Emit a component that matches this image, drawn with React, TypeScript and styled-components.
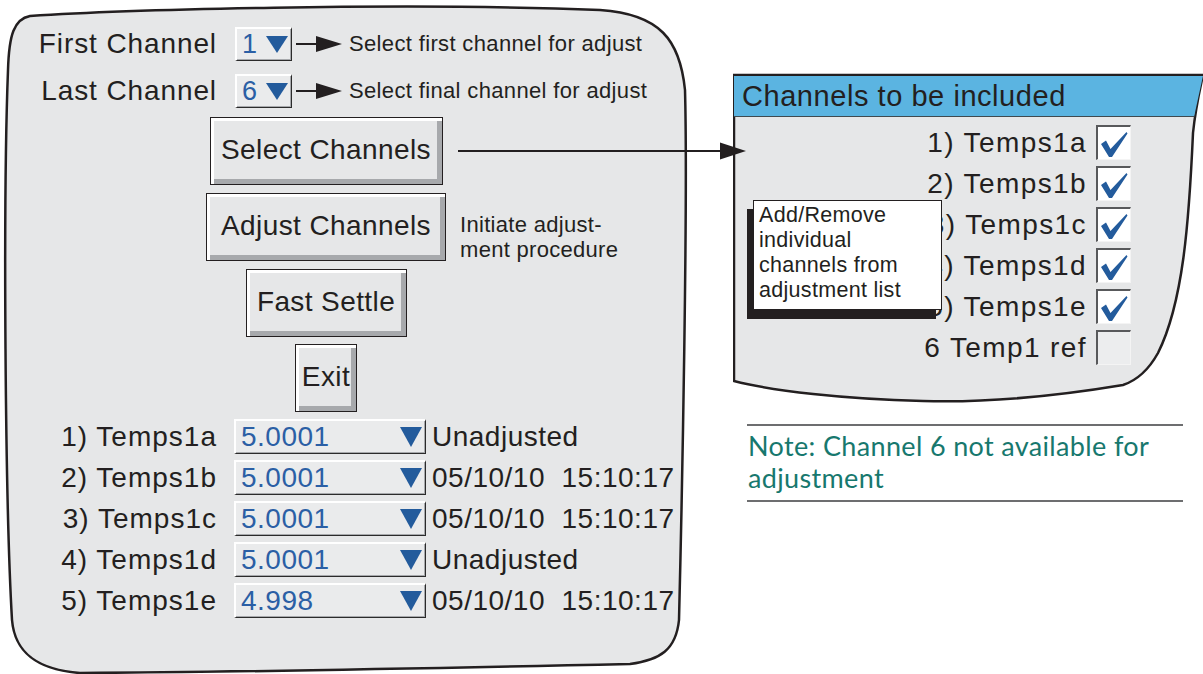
import styled, { createGlobalStyle } from "styled-components";

const GlobalStyle = createGlobalStyle`
  html, body {
    margin: 0;
    padding: 0;
    background: #fff;
  }
  body {
    font-family: "Liberation Sans", Arial, sans-serif;
    color: #231f20;
  }
  * {
    box-sizing: border-box;
  }
`;

const Page = styled.div`
  display: flex;
  width: 1203px;
  height: 674px;
  overflow: hidden;
`;

const LeftPanel = styled.div`
  position: relative;
  flex-shrink: 0;
  width: 690px;
  height: 674px;
  padding-top: 27px;
`;

const Outline = styled.svg`
  position: absolute;
  inset: 0;
  z-index: 0;
`;

const Content = styled.div`
  position: relative;
  z-index: 1;
`;

const PickerRow = styled.div`
  display: flex;
  align-items: center;
  height: 34px;

  & + & {
    margin-top: 13px;
  }
`;

const PickerLabel = styled.span`
  width: 217px;
  margin-right: 18px;
  text-align: right;
  font-size: 28px;
  letter-spacing: 0.9px;
`;

const Dropdown = styled.div<{ $width: number; $height: number; $size: number }>`
  display: flex;
  align-items: center;
  justify-content: space-between;
  flex-shrink: 0;
  width: ${(p) => p.$width}px;
  height: ${(p) => p.$height}px;
  padding: 0 3px 0 5px;
  background: #eaebec;
  border-top: 2px solid #fff;
  border-left: 2px solid #fff;
  border-right: 1px solid #2b2b2b;
  border-bottom: 1px solid #2b2b2b;
  box-shadow: inset -1px -1px 0 #a7a9ac;
  color: #2b5fa5;
  font-size: ${(p) => p.$size}px;
  letter-spacing: 0.5px;
`;

const Triangle = styled.span<{ $w: number; $h: number }>`
  width: 0;
  height: 0;
  border-left: ${(p) => p.$w / 2}px solid transparent;
  border-right: ${(p) => p.$w / 2}px solid transparent;
  border-top: ${(p) => p.$h}px solid #235b9c;
`;

const SmallArrow = styled.svg`
  margin-left: 4px;
  flex-shrink: 0;
`;

const Hint = styled.span`
  margin-left: 7px;
  font-size: 22px;
  letter-spacing: 0.35px;
`;

const ButtonGrid = styled.div`
  display: grid;
  grid-template-columns: minmax(0, 1fr) auto minmax(0, 1fr);
  row-gap: 7px;
  width: 652px;
  margin-top: 9px;
  align-items: center;
`;

const Button = styled.button<{ $width: number }>`
  grid-column: 2;
  justify-self: center;
  width: ${(p) => p.$width}px;
  height: 68px;
  padding: 0 0 2px;
  background: #e6e7e8;
  border: 1px solid #231f20;
  box-shadow: inset 3px 3px 0 #fff, inset -5px -5px 0 #a7a9ac;
  font-family: "Liberation Sans", Arial, sans-serif;
  font-size: 28px;
  letter-spacing: 0.4px;
  color: #231f20;
`;

const LongArrow = styled.svg`
  grid-column: 3;
  position: relative;
  z-index: 2;
  margin-left: 12px;
  overflow: visible;
`;

const SideNote = styled.div`
  grid-column: 3;
  align-self: start;
  margin: 20px 0 0 14px;
  font-size: 22px;
  line-height: 25px;
  letter-spacing: 0.3px;
  white-space: nowrap;
`;

const ValueList = styled.div`
  display: flex;
  flex-direction: column;
  gap: 6px;
  margin-top: 7px;
`;

const ValueRow = styled.div`
  display: flex;
  align-items: center;
  height: 35px;
`;

const RowLabel = styled.span`
  width: 217px;
  margin-right: 17px;
  text-align: right;
  font-size: 28px;
  letter-spacing: 1px;
`;

const Status = styled.span`
  margin-left: 6px;
  font-size: 28px;
  letter-spacing: 0.5px;
  white-space: pre;
`;

const RightColumn = styled.div`
  display: flex;
  flex-direction: column;
  width: 470px;
  margin-left: 43px;
  padding-top: 73px;
`;

const IncludePanel = styled.div`
  position: relative;
  width: 470px;
  height: 335px;
  flex-shrink: 0;
`;

const PanelBody = styled.div`
  position: relative;
  z-index: 1;
  height: 100%;
`;

const PanelHeader = styled.div`
  height: 41px;
  margin: 3px 0 0 1px;
  padding: 2px 0 0 8px;
  background: #5bb4e1;
  border-bottom: 1px solid #3f4a50;
  clip-path: polygon(0 0, 100% 0, calc(100% - 9px) 100%, 0 100%);
  font-size: 29px;
  letter-spacing: 0.55px;
  line-height: 36px;
`;

const CheckList = styled.div`
  display: flex;
  flex-direction: column;
  align-items: flex-end;
  gap: 6px;
  padding: 8px 72px 0 0;
`;

const CheckRow = styled.div`
  display: flex;
  align-items: center;
  height: 35px;
`;

const CheckLabel = styled.span`
  font-size: 28px;
  letter-spacing: 1.4px;
`;

const CheckBox = styled.div<{ $checked: boolean }>`
  display: flex;
  width: 35px;
  height: 35px;
  margin-left: 9px;
  background: ${(p) => (p.$checked ? "#fff" : "#ecedee")};
  border-top: 2px solid #58595b;
  border-left: 2px solid #58595b;
  border-right: 1px solid #f4f4f4;
  border-bottom: 1px solid #f4f4f4;
`;

const Tooltip = styled.div`
  position: absolute;
  left: 20px;
  top: 124px;
  z-index: 2;
  width: 189px;
  height: 110px;
  padding: 2px 5px;
  background: #fff;
  border: 1px solid #231f20;
  box-shadow: -6px 9px 0 #231f20;
  font-size: 21.5px;
  line-height: 25px;
  letter-spacing: 0.3px;
  white-space: nowrap;
`;

const Note = styled.div`
  width: 436px;
  margin: 16px 0 0 14px;
  padding: 4px 0 6px 1px;
  border-top: 2px solid #6d6e70;
  border-bottom: 2px solid #6d6e70;
  font-family: Lato, "Open Sans", sans-serif;
  font-size: 27px;
  line-height: 32px;
  letter-spacing: 0.35px;
  color: #17786e;
`;

const pickers = [
  { label: "First Channel", value: "1", hint: "Select first channel for adjust" },
  { label: "Last Channel", value: "6", hint: "Select final channel for adjust" },
];

const channels = [
  { label: "1) Temps1a", value: "5.0001", status: "Unadjusted" },
  { label: "2) Temps1b", value: "5.0001", status: "05/10/10  15:10:17" },
  { label: "3) Temps1c", value: "5.0001", status: "05/10/10  15:10:17" },
  { label: "4) Temps1d", value: "5.0001", status: "Unadjusted" },
  { label: "5) Temps1e", value: "4.998", status: "05/10/10  15:10:17" },
];

const included = [
  { label: "1) Temps1a", checked: true },
  { label: "2) Temps1b", checked: true },
  { label: "3) Temps1c", checked: true },
  { label: "4) Temps1d", checked: true },
  { label: "5) Temps1e", checked: true },
  { label: "6 Temp1 ref", checked: false },
];

const Tick = () => (
  <svg width="32" height="32" viewBox="0 0 32 32">
    <path d="M3 17 L8 13.5 L12.5 22 L28.5 5 L29.5 6.5 L14 30 L11 30 Z" fill="#235b9c" />
  </svg>
);

const App: React.FC<{}> = () => {
  return (
    <Page>
      <GlobalStyle />
      <LeftPanel>
        <Outline width="690" height="674" viewBox="0 0 690 674">
          <path
            d="M30 16 C120 10 400 2 600 10 C660 14 680 40 685 90 C688 200 682 500 679 620 C676 650 660 660 630 664 C450 668 250 672 80 673 C40 670 15 655 12 620 C5 500 3 200 8 70 C9 35 14 19 30 16 Z"
            fill="#e6e7e8"
            stroke="#231f20"
            strokeWidth="2.5"
          />
        </Outline>
        <Content>
          {pickers.map((picker) => (
            <PickerRow key={picker.label}>
              <PickerLabel>{picker.label}</PickerLabel>
              <Dropdown $width={57} $height={34} $size={27}>
                {picker.value}
                <Triangle $w={22} $h={17} />
              </Dropdown>
              <SmallArrow width="46" height="18" viewBox="0 0 46 18">
                <line x1="0" y1="9" x2="22" y2="9" stroke="#231f20" strokeWidth="2" />
                <polygon points="20,1 46,9 20,17" fill="#231f20" />
              </SmallArrow>
              <Hint>{picker.hint}</Hint>
            </PickerRow>
          ))}

          <ButtonGrid>
            <Button $width={233}>Select Channels</Button>
            <LongArrow width="288" height="20" viewBox="0 0 288 20">
              <line x1="0" y1="10" x2="266" y2="10" stroke="#231f20" strokeWidth="2" />
              <polygon points="262,1.5 288,10 262,18.5" fill="#231f20" />
            </LongArrow>
            <Button $width={240}>Adjust Channels</Button>
            <SideNote>
              Initiate adjust-
              <br />
              ment procedure
            </SideNote>
            <Button $width={161}>Fast Settle</Button>
            <Button $width={62}>Exit</Button>
          </ButtonGrid>

          <ValueList>
            {channels.map((ch) => (
              <ValueRow key={ch.label}>
                <RowLabel>{ch.label}</RowLabel>
                <Dropdown $width={192} $height={35} $size={28}>
                  {ch.value}
                  <Triangle $w={23} $h={20} />
                </Dropdown>
                <Status>{ch.status}</Status>
              </ValueRow>
            ))}
          </ValueList>
        </Content>
      </LeftPanel>

      <RightColumn>
        <IncludePanel>
          <Outline width="470" height="335" viewBox="0 0 470 335">
            <path
              d="M1 2 L470 2 C466 20 462 40 460 60 C456 150 450 230 425 280 C415 298 402 308 390 312 C330 322 260 330 190 328 C110 326 40 318 1 308 Z"
              fill="#e6e7e8"
              stroke="#231f20"
              strokeWidth="2.5"
            />
          </Outline>
          <PanelBody>
            <PanelHeader>Channels to be included</PanelHeader>
            <CheckList>
              {included.map((item) => (
                <CheckRow key={item.label}>
                  <CheckLabel>{item.label}</CheckLabel>
                  <CheckBox $checked={item.checked}>{item.checked && <Tick />}</CheckBox>
                </CheckRow>
              ))}
            </CheckList>
            <Tooltip>
              Add/Remove
              <br />
              individual
              <br />
              channels from
              <br />
              adjustment list
            </Tooltip>
          </PanelBody>
        </IncludePanel>
        <Note>
          Note: Channel 6 not available for
          <br />
          adjustment
        </Note>
      </RightColumn>
    </Page>
  );
};

export default App;
